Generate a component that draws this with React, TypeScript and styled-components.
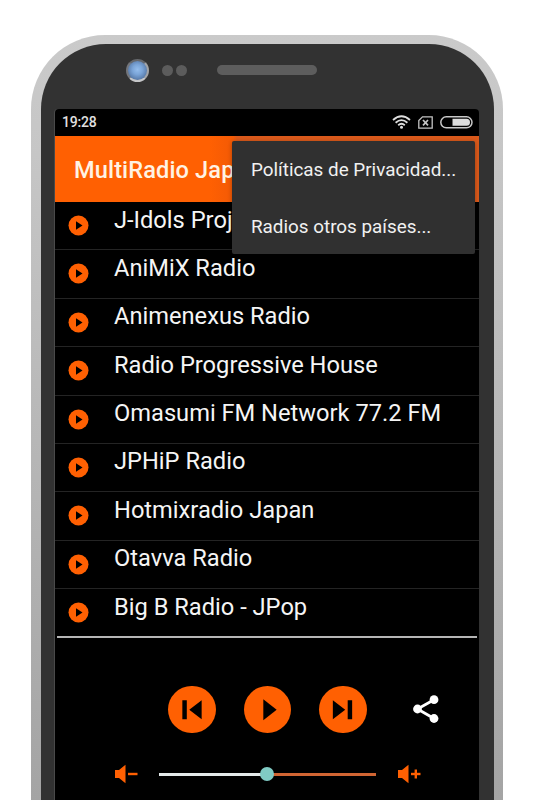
import React from 'react';
import styled, { createGlobalStyle } from 'styled-components';

const ORANGE = '#ff6002';

const GlobalStyle = createGlobalStyle`
  * { box-sizing: border-box; }
  html, body { margin: 0; padding: 0; background: #fff; }
  body { font-family: Roboto, "Noto Sans", sans-serif; overflow: hidden; }
`;

const Page = styled.main`
  width: 533px;
  height: 800px;
  padding: 35px 30px 0 31px;
  overflow: hidden;
  background: #fff;
`;

const PhoneShell = styled.div`
  height: 1000px;
  padding: 9px 9px 0 10px;
  border-radius: 74px 74px 0 0;
  background: linear-gradient(#cacaca 0, #c6c6c6 120px, #a4a4a4 765px);
`;

const PhoneBody = styled.div`
  height: 100%;
  padding: 0 14px;
  border-radius: 65px 65px 0 0;
  background: #323232;
`;

const SensorBar = styled.div`
  height: 65px;
  display: flex;
  align-items: flex-start;
  padding: 15px 0 0 71px;
`;

const Camera = styled.div`
  width: 23px;
  height: 23px;
  border-radius: 50%;
  border: 2px solid;
  border-color: #65676b #a3a5a8 #c5c6c8 #74767b;
  background: radial-gradient(circle at 50% 45%, #94bdec 0, #7ba5d8 35%, #5c7fae 68%, #45536a 100%);
`;

const Sensor = styled.i`
  width: 11px;
  height: 11px;
  margin: 6px 0 0 3px;
  border-radius: 50%;
  background: #5c5c5c;
  &:first-of-type { margin-left: 13px; }
`;

const Speaker = styled.div`
  width: 100px;
  height: 10px;
  margin: 6px 0 0 30px;
  border-radius: 5px;
  background: #5d5d5d;
`;

const Screen = styled.div`
  position: relative;
  width: 424px;
  height: 760px;
  border-radius: 4px 4px 0 0;
  background: #000;
  box-shadow: -1px 0 0 #4a4a4a;
`;

const StatusBar = styled.div`
  height: 27px;
  display: flex;
  align-items: center;
  padding: 0 6px 1px 7px;
  color: #e0e0e0;
  font-size: 14px;
  font-weight: 500;
  letter-spacing: -0.2px;
`;

const StatusIcons = styled.div`
  display: flex;
  align-items: center;
  margin-left: auto;
  gap: 7px;
`;

const AppBar = styled.header`
  height: 66px;
  padding: 2px 0 0 19px;
  display: flex;
  align-items: center;
  background: linear-gradient(90deg, #ff6002 0, #ff6002 155px, #f35a05 178px, #d9591b 182px);
  color: #fff3e4;
  font-size: 23.6px;
  font-weight: 500;
  letter-spacing: 0.12px;
  white-space: nowrap;
`;

const Menu = styled.nav`
  position: absolute;
  top: 32px;
  left: 177px;
  width: 243px;
  height: 113px;
  padding-left: 19px;
  border-radius: 2px;
  background: #303030;
  box-shadow: 0 1px 4px rgba(0, 0, 0, 0.3);
`;

const MenuItem = styled.div`
  height: 57px;
  display: flex;
  align-items: center;
  color: #f1f1f1;
  font-size: 18.85px;
  white-space: nowrap;
`;

const StationList = styled.ul`
  margin: 0;
  padding: 0;
  list-style: none;
`;

const StationRow = styled.li`
  height: 48.4px;
  display: flex;
  align-items: flex-start;
  padding: 0 0 0 13px;
  border-bottom: 1px solid #242424;
  color: #f5f5f5;
  font-size: 23.66px;
  &:last-child { border-bottom-color: transparent; }
`;

const RowIcon = styled.svg`
  width: 21px;
  height: 21px;
  margin: 13px 25px 0 0;
  flex: none;
`;

const StationName = styled.span`
  line-height: 28px;
  padding-top: 3.5px;
  white-space: nowrap;
`;

const ListEnd = styled.div`
  height: 2px;
  margin: -2px 2px 0;
  background: #b5b5b5;
`;

const Controls = styled.div`
  display: flex;
  align-items: center;
  padding: 48px 0 0 113px;
`;

const RoundButton = styled.button`
  width: 47.5px;
  height: 47.5px;
  margin: 0 28px 0 0;
  padding: 0;
  border: 0;
  border-radius: 50%;
  background: ${ORANGE};
  svg { display: block; width: 100%; height: 100%; }
`;

const ShareButton = styled.button`
  width: 28px;
  height: 28px;
  margin-left: 17px;
  padding: 0;
  border: 0;
  background: none;
  svg { display: block; }
`;

const VolumeRow = styled.div`
  height: 22px;
  margin-top: 30px;
  padding-left: 59px;
  display: flex;
  align-items: center;
`;

const Track = styled.div`
  position: relative;
  width: 217px;
  height: 3px;
  margin: 0 21px 0 20px;
  background: linear-gradient(90deg, #e4eaea 109px, #d06533 109px);
`;

const Thumb = styled.div`
  position: absolute;
  left: 101px;
  top: -5.5px;
  width: 14px;
  height: 14px;
  border-radius: 50%;
  background: #80cbc4;
`;

const stations = [
  'J-Idols Project',
  'AniMiX Radio',
  'Animenexus Radio',
  'Radio Progressive House',
  'Omasumi FM Network 77.2 FM',
  'JPHiP Radio',
  'Hotmixradio Japan',
  'Otavva Radio',
  'Big B Radio - JPop',
];

function Wifi() {
  return (
    <svg width="19" height="14" viewBox="0 0 19 14" fill="none" stroke="#dedede" strokeWidth="1.8">
      <path d="M1 5Q9.500 -2.500 18 5" />
      <path d="M3.600 7.700Q9.500 2.600 15.400 7.700" />
      <path d="M6.200 10.200Q9.500 7.400 12.800 10.200" />
      <circle cx="9.500" cy="12.200" r="1.500" fill="#dedede" stroke="none" />
    </svg>
  );
}

function NoSim() {
  return (
    <svg width="15" height="13" viewBox="0 0 15 13" fill="none" stroke="#c4c4c4" strokeWidth="1.3">
      <path d="M4.500 .8H14.200V12.200H.8V4.500Z" />
      <path d="M5 4L10 9.300M10 4L5 9.300" strokeWidth="1.700" />
    </svg>
  );
}

function Battery() {
  return (
    <svg width="33" height="13" viewBox="0 0 33 13">
      <rect x=".8" y=".8" width="31.200" height="11" rx="5.500" fill="none" stroke="#c8c8c8" strokeWidth="1.500" />
      <path d="M12.500 2.800H26.500A3.500 3.500 0 0 1 26.500 9.800H12.500Z" fill="#dcdcdc" />
    </svg>
  );
}

function Volume({ plus = false }: { plus?: boolean }) {
  return (
    <svg width="25" height="20" viewBox="0 0 25 20" fill={ORANGE}>
      <path d="M1 6H5L11.500 .8V19.200L5 14H1Z" />
      <path d="M14 8.800H23.500V11.200H14Z" />
      {plus && <path d="M17.600 5.500H20V14.500H17.600Z" />}
    </svg>
  );
}

export default function App() {
  return (
    <>
      <GlobalStyle />
      <Page>
        <PhoneShell>
          <PhoneBody>
            <SensorBar>
              <Camera />
              <Sensor />
              <Sensor />
              <Speaker />
            </SensorBar>
            <Screen>
              <StatusBar>
                19:28
                <StatusIcons>
                  <Wifi />
                  <NoSim />
                  <Battery />
                </StatusIcons>
              </StatusBar>
              <AppBar>MultiRadio Japan</AppBar>
              <StationList>
                {stations.map((name) => (
                  <StationRow key={name}>
                    <RowIcon viewBox="0 0 21 21">
                      <circle cx="10.500" cy="10.500" r="10" fill={ORANGE} />
                      <path d="M8 6.300L14.500 10.500L8 14.700Z" fill="#000" />
                    </RowIcon>
                    <StationName>{name}</StationName>
                  </StationRow>
                ))}
              </StationList>
              <ListEnd />
              <Controls>
                <RoundButton aria-label="Anterior">
                  <svg viewBox="0 0 48 48">
                    <path d="M14.500 14.500H19V33.500H14.500ZM34 14.500V33.500L21.500 24Z" />
                  </svg>
                </RoundButton>
                <RoundButton aria-label="Reproducir">
                  <svg viewBox="0 0 48 48">
                    <path d="M19.500 13.500V34.500L33 24Z" />
                  </svg>
                </RoundButton>
                <RoundButton aria-label="Siguiente">
                  <svg viewBox="0 0 48 48">
                    <path d="M14 14.500V33.500L26.500 24ZM29 14.500H33.500V33.500H29Z" />
                  </svg>
                </RoundButton>
                <ShareButton aria-label="Compartir">
                  <svg width="28" height="28" viewBox="0 0 28 28" fill="#fff">
                    <path d="M22 4.700L5.500 14L22 23.500" fill="none" stroke="#fff" strokeWidth="2.800" />
                    <circle cx="22" cy="4.700" r="4.400" />
                    <circle cx="5.500" cy="14" r="4.400" />
                    <circle cx="22" cy="23.500" r="4.400" />
                  </svg>
                </ShareButton>
              </Controls>
              <VolumeRow>
                <Volume />
                <Track>
                  <Thumb />
                </Track>
                <Volume plus />
              </VolumeRow>
              <Menu>
                <MenuItem>Políticas de Privacidad...</MenuItem>
                <MenuItem>Radios otros países...</MenuItem>
              </Menu>
            </Screen>
          </PhoneBody>
        </PhoneShell>
      </Page>
    </>
  );
}
